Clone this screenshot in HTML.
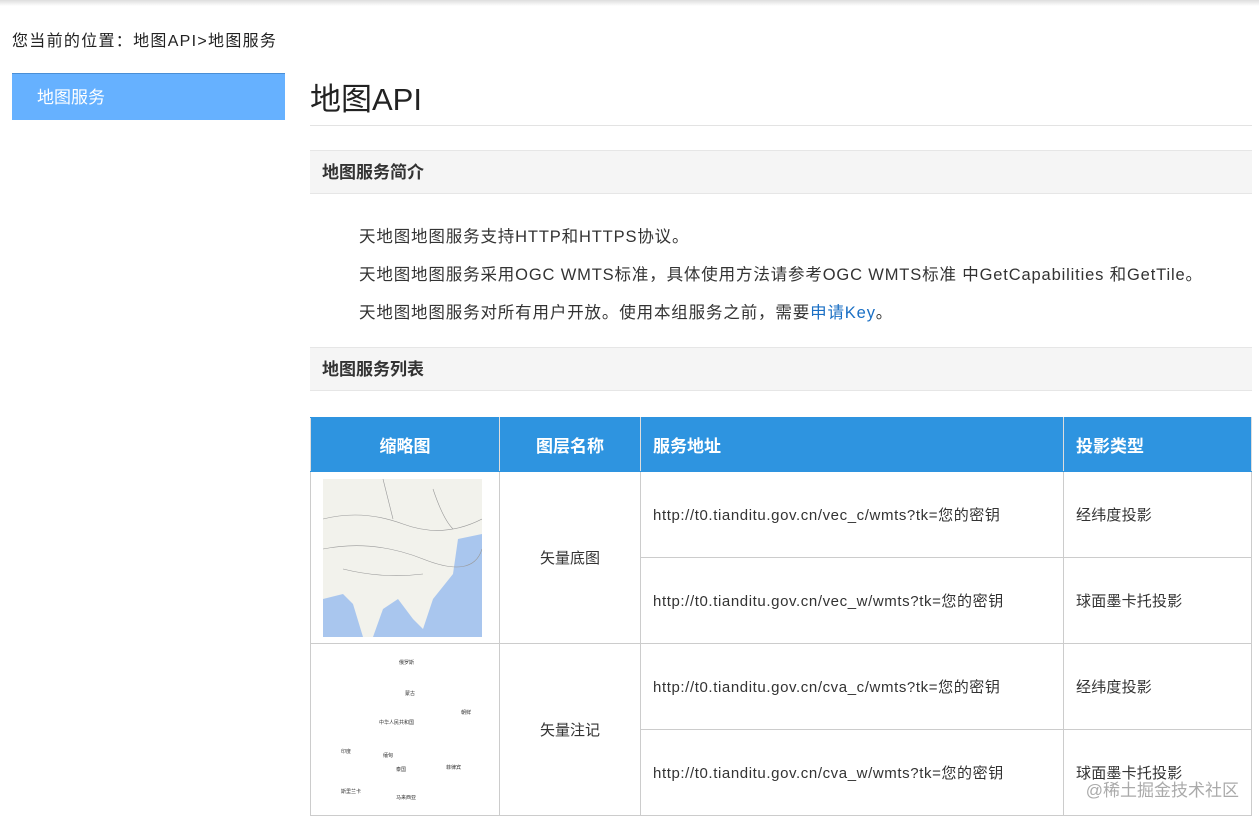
<!DOCTYPE html><html><head><meta charset="utf-8"><style>
body{margin:0;width:1259px;height:819px;overflow:hidden;background:#fff;font-family:"Liberation Sans","Noto Sans CJK SC",sans-serif;color:#333;position:relative}
.top{position:absolute;left:0;top:0;width:1259px;height:6px;background:linear-gradient(#ddd,#fff)}
.crumb{position:absolute;left:12px;top:27px;font-size:16px;color:#222;letter-spacing:1.3px}
.side{position:absolute;left:12px;top:73px;width:273px;height:47px;background:#66b1ff;border-top:1px solid #4a8fd6;color:#fff;font-size:17px;line-height:47px;box-sizing:border-box;padding-left:25px}
h1{position:absolute;left:310px;top:74px;margin:0;font-weight:normal;font-size:31px;color:#222}
.hr{position:absolute;left:310px;top:125px;width:942px;height:1px;background:#e3e3e3}
.sec{position:absolute;left:310px;width:942px;height:44px;background:#f5f5f5;border-top:1px solid #e6e6e6;border-bottom:1px solid #e6e6e6;font-weight:bold;font-size:17px;line-height:44px;padding-left:12px;box-sizing:border-box;color:#333}
.p{position:absolute;left:359px;font-size:16.5px;color:#333;letter-spacing:0.85px}
.p a{color:#1a6fc4;text-decoration:none}
table{position:absolute;left:310px;top:417px;border-collapse:collapse;font-size:15px;color:#333}
td,th{border:1px solid #ccc;padding:0}
th{background:#2e94e0;color:#fff;font-size:17px;height:53px;border-color:#2e94e0 #ddd}
th.l{text-align:left;padding-left:12px}
td{height:85px}
td.u{padding-left:12px;letter-spacing:0.6px}
td.c{padding-left:12px;letter-spacing:0.2px}
.wm{position:absolute;right:20px;top:776px;font-size:17px;color:#aaa}
</style></head><body>
<div class="top"></div>
<div class="crumb">您当前的位置：地图API&gt;地图服务</div>
<div class="side">地图服务</div>
<h1>地图API</h1>
<div class="hr"></div>
<div class="sec" style="top:150px">地图服务简介</div>
<div class="p" style="top:223px">天地图地图服务支持HTTP和HTTPS协议。</div>
<div class="p" style="top:261px">天地图地图服务采用OGC WMTS标准，具体使用方法请参考OGC WMTS标准 中GetCapabilities 和GetTile。</div>
<div class="p" style="top:299px">天地图地图服务对所有用户开放。使用本组服务之前，需要<a>申请Key</a>。</div>
<div class="sec" style="top:347px">地图服务列表</div>
<table>
<tr><th style="width:188px">缩略图</th><th style="width:140px">图层名称</th><th class="l" style="width:410px">服务地址</th><th class="l" style="width:175px">投影类型</th></tr>
<tr><td rowspan="2"><svg width="159" height="158" style="display:block;margin-left:12px"><rect width="159" height="158" fill="#f2f2ec"/><path d="M0 120 L20 115 L30 125 L40 158 L0 158Z M50 158 L60 130 L75 120 L90 140 L100 150 L110 120 L130 95 L135 60 L159 55 L159 158Z" fill="#a9c6ee"/><path d="M0 40 Q40 30 80 45 T159 40 M0 70 Q50 60 100 80 T159 70 M20 90 Q60 100 100 95 M60 0 L70 40 M110 10 Q120 40 130 50" stroke="#999" fill="none" stroke-width=".6"/></svg></td><td rowspan="2" style="text-align:center">矢量底图</td><td class="u">http://t0.tianditu.gov.cn/vec_c/wmts?tk=您的密钥</td><td class="c">经纬度投影</td></tr>
<tr><td class="u">http://t0.tianditu.gov.cn/vec_w/wmts?tk=您的密钥</td><td class="c">球面墨卡托投影</td></tr>
<tr><td rowspan="2" style="position:relative;font-size:5px"><span style="position:absolute;left:88px;top:15px">俄罗斯</span><span style="position:absolute;left:94px;top:46px">蒙古</span><span style="position:absolute;left:68px;top:75px">中华人民共和国</span><span style="position:absolute;left:150px;top:65px">朝鲜</span><span style="position:absolute;left:30px;top:104px">印度</span><span style="position:absolute;left:72px;top:108px">缅甸</span><span style="position:absolute;left:85px;top:122px">泰国</span><span style="position:absolute;left:135px;top:120px">菲律宾</span><span style="position:absolute;left:30px;top:144px">斯里兰卡</span><span style="position:absolute;left:85px;top:150px">马来西亚</span></td><td rowspan="2" style="text-align:center">矢量注记</td><td class="u">http://t0.tianditu.gov.cn/cva_c/wmts?tk=您的密钥</td><td class="c">经纬度投影</td></tr>
<tr><td class="u">http://t0.tianditu.gov.cn/cva_w/wmts?tk=您的密钥</td><td class="c">球面墨卡托投影</td></tr>
</table>
<div class="wm">@稀土掘金技术社区</div>
</body></html>
